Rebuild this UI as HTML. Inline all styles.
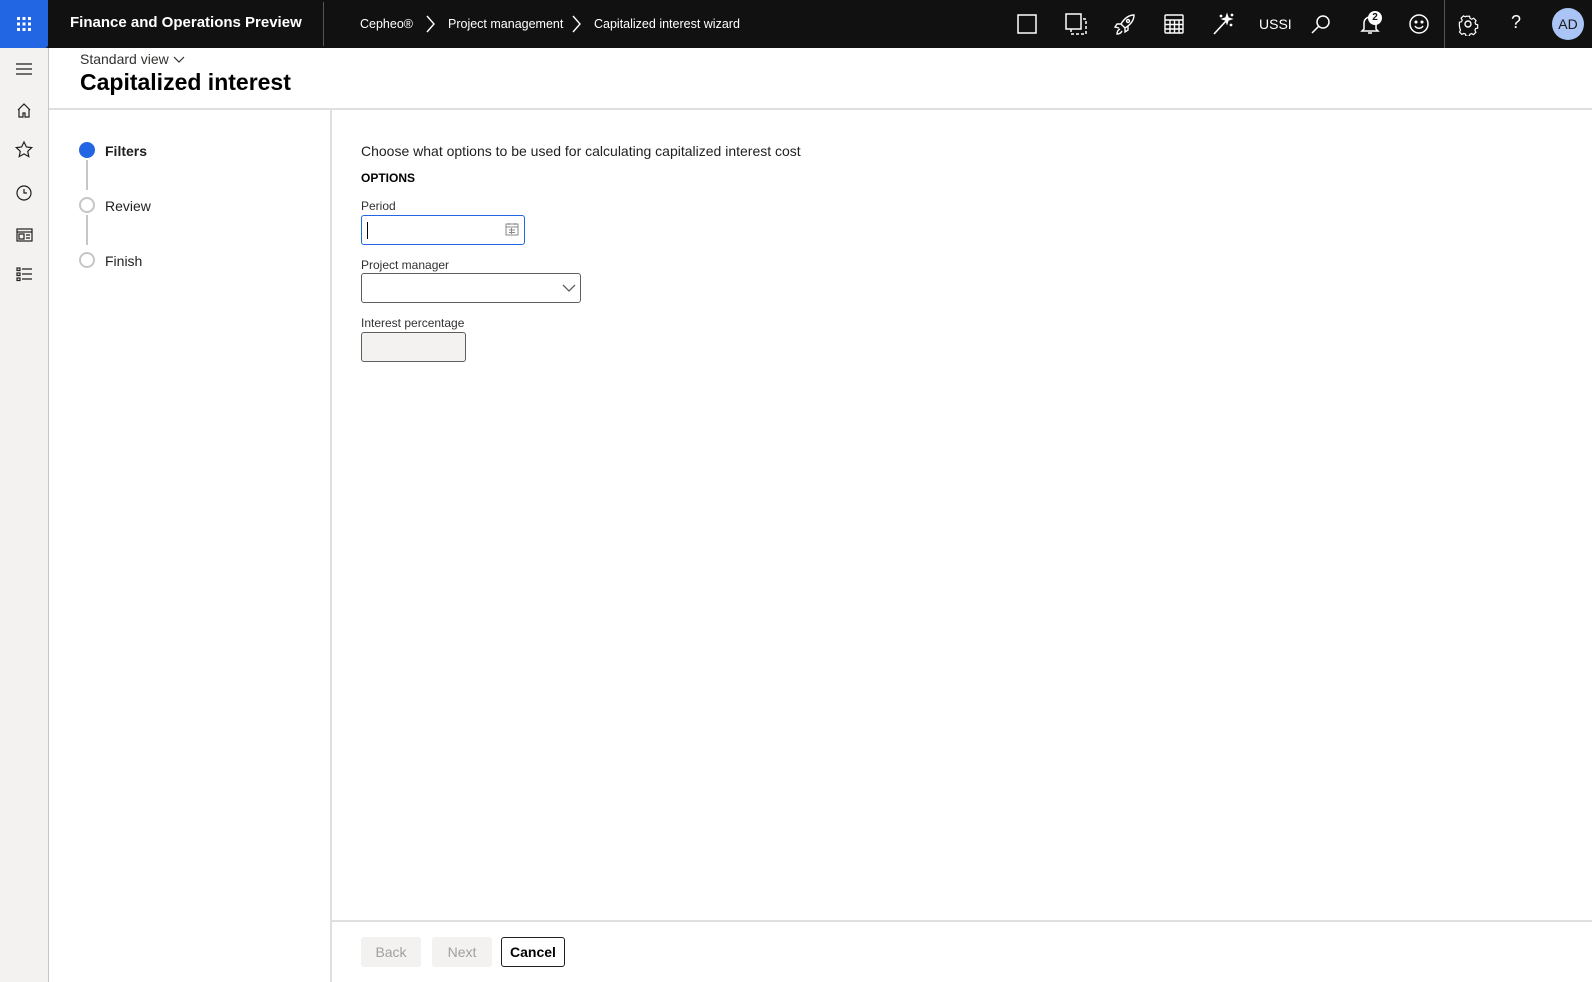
<!DOCTYPE html>
<html><head><meta charset="utf-8"><style>
*{box-sizing:border-box;margin:0;padding:0}
body{width:1592px;height:982px;overflow:hidden;background:#fff;font-family:"Segoe UI","Liberation Sans",sans-serif;color:#201f1e;position:relative}
.abs{position:absolute}
.hdr{left:0;top:0;width:1592px;height:48px;background:#111}
.w{color:#fff}
.ico{position:absolute;top:12px;width:24px;height:24px}
svg{display:block}
.rail{left:0;top:48px;width:49px;height:934px;background:#f3f2f1;border-right:1px solid #c8c6c4}
.lbl{font-size:12px;color:#323130}
</style></head><body>
<div class="abs hdr"></div>
<div class="abs" style="left:0;top:0;width:48px;height:48px;background:#2266e3;border-radius:0 0 3px 0"></div>
<svg class="abs" style="left:16px;top:16px" width="16" height="16" fill="#fff">
<rect x="1" y="1" width="3" height="3"/><rect x="6.5" y="1" width="3" height="3"/><rect x="12" y="1" width="3" height="3"/>
<rect x="1" y="6.5" width="3" height="3"/><rect x="6.5" y="6.5" width="3" height="3"/><rect x="12" y="6.5" width="3" height="3"/>
<rect x="1" y="12" width="3" height="3"/><rect x="6.5" y="12" width="3" height="3"/><rect x="12" y="12" width="3" height="3"/></svg>
<div class="abs w" style="left:70px;top:14px;font-size:15px;font-weight:bold">Finance and Operations Preview</div>
<div class="abs" style="left:323px;top:2px;width:1px;height:44px;background:#555"></div>
<div class="abs w" style="left:360px;top:17px;font-size:12.5px">Cepheo®</div>
<svg class="abs" style="left:424px;top:14px" width="12" height="20"><path d="M3 2l7 8-7 8" stroke="#fff" fill="none" stroke-width="1.4"/></svg>
<div class="abs w" style="left:448px;top:17px;font-size:12.5px">Project management</div>
<svg class="abs" style="left:570px;top:14px" width="12" height="20"><path d="M3 2l7 8-7 8" stroke="#fff" fill="none" stroke-width="1.4"/></svg>
<div class="abs w" style="left:594px;top:17px;font-size:12.5px">Capitalized interest wizard</div>
<svg class="ico" style="left:1015px" viewBox="0 0 24 24" fill="none" stroke="#fff" stroke-width="1.5"><rect x="3" y="3" width="18" height="18"/></svg>
<svg class="ico" style="left:1064px" viewBox="0 0 24 24" fill="none" stroke="#fff" stroke-width="1.5"><rect x="2" y="2" width="15" height="15"/><path d="M7 17v5h15V7h-5" stroke-dasharray="3 2"/></svg>
<svg class="ico" style="left:1113px" viewBox="0 0 24 24" fill="none" stroke="#fff" stroke-width="1.4"><path d="M21 3c-6 0-10 4-13 9l4 4c5-3 9-7 9-13zM8 12l-4 0-2 3 4 1M12 16v4l3-2 0-4M7 17c-2 1-3 3-3 5 2 0 4-1 5-3"/><circle cx="15" cy="9" r="1.5"/></svg>
<svg class="ico" style="left:1162px" viewBox="0 0 24 24" fill="none" stroke="#fff" stroke-width="1.4"><rect x="3" y="3" width="18" height="18" rx="1"/><path d="M3 8h18M3 12.5h18M3 17h18M8 8v13M12.5 8v13M17 8v13"/></svg>
<svg class="ico" style="left:1211px" viewBox="0 0 24 24" fill="none" stroke="#fff" stroke-width="1.6"><path d="M3 22L15 9"/><path d="M16 3l1 3 3 1-3 1-1 3-1-3-3-1 3-1z" fill="#fff"/><circle cx="21" cy="3" r=".6" fill="#fff"/><circle cx="10" cy="4" r=".6" fill="#fff"/><circle cx="20" cy="13" r=".6" fill="#fff"/></svg>
<div class="abs w" style="left:1259px;top:16px;font-size:14px">USSI</div>
<svg class="ico" style="left:1309px" viewBox="0 0 24 24" fill="none" stroke="#fff" stroke-width="1.5"><circle cx="14" cy="10" r="6"/><path d="M10 14l-7 7"/></svg>
<svg class="ico" style="left:1358px" viewBox="0 0 24 24" fill="none" stroke="#fff" stroke-width="1.5"><path d="M6 17V11a6 6 0 0112 0v6l2 2H4zM10 21h4"/></svg>
<div class="abs" style="left:1368px;top:11px;width:14px;height:14px;border-radius:7px;background:#fff;color:#111;font-size:10px;font-weight:bold;text-align:center;line-height:14px">2</div>
<svg class="ico" style="left:1407px" viewBox="0 0 24 24" fill="none" stroke="#fff" stroke-width="1.5"><circle cx="12" cy="12" r="9"/><path d="M8 14c2 3 6 3 8 0"/><circle cx="9" cy="10" r=".8" fill="#fff"/><circle cx="15" cy="10" r=".8" fill="#fff"/></svg>
<div class="abs" style="left:1444px;top:0;width:1px;height:48px;background:#555"></div>
<svg class="ico" style="left:1456px" viewBox="0 0 24 24" fill="none" stroke="#fff" stroke-width="1.4"><circle cx="12" cy="12" r="3"/><path d="M10 3h4l.5 2.5 2 1 2.3-1.2 2.8 2.8-1.2 2.3.8 2 2.3.6v4l-2.5.5-.8 2 1.2 2.3-2.8 2.8-2.3-1.2-2 .8-.6 2.3h-4l-.5-2.5-2-.8-2.3 1.2-2.8-2.8 1.2-2.3-.8-2L2 14v-4l2.5-.5.8-2L4 5.3 6.8 2.5 9 3.7l1-.7z" transform="scale(.85) translate(2 2)"/></svg>
<div class="abs w" style="left:1511px;top:12px;font-size:18px">?</div>
<div class="abs" style="left:1552px;top:8px;width:32px;height:32px;border-radius:16px;background:#a9c4f5;color:#1a1a1a;font-size:14px;text-align:center;line-height:32px">AD</div>
<div class="abs rail"></div>
<svg class="abs" style="left:14px;top:60px" width="20" height="240" fill="none" stroke="#201f1e" stroke-width="1.2">
<path d="M2 4h16M2 9h16M2 14h16"/>
<path d="M4 50l6-6 6 6M5 49v8h4v-4h2v4h4v-8"/>
<path d="M10 82l2.4 5 5.3.6-4 3.7 1.1 5.3-4.8-2.7-4.8 2.7 1.1-5.3-4-3.7 5.3-.6z"/>
<circle cx="10" cy="133" r="7"/><path d="M10 129v4h3"/>
<rect x="3" y="169" width="15" height="12"/><path d="M3 172h15"/><rect x="5" y="174" width="5" height="5"/><path d="M12 175h4M12 178h4"/>
<rect x="3" y="208" width="3" height="2.5"/><rect x="3" y="213" width="3" height="2.5"/><rect x="3" y="218" width="3" height="2.5"/><path d="M8 209h10M8 214h10M8 219h10"/>
</svg>
<div class="abs" style="left:80px;top:51px;font-size:14px;color:#323130">Standard view <svg style="display:inline;vertical-align:middle" width="12" height="12"><path d="M1 3l5 5 5-5" stroke="#323130" fill="none" stroke-width="1.2"/></svg></div>
<div class="abs" style="left:80px;top:69px;font-size:23px;font-weight:600;color:#000">Capitalized interest</div>
<div class="abs" style="left:49px;top:108px;width:1543px;height:2px;background:#e1dfdd"></div>
<div class="abs" style="left:330px;top:110px;width:2px;height:872px;background:#e1dfdd"></div>
<div class="abs" style="left:79px;top:142px;width:16px;height:16px;border-radius:8px;background:#2266e3"></div>
<div class="abs" style="left:86px;top:160px;width:2px;height:30px;background:#c8c6c4"></div>
<div class="abs" style="left:79px;top:197px;width:16px;height:16px;border-radius:8px;border:2px solid #c8c6c4"></div>
<div class="abs" style="left:86px;top:215px;width:2px;height:30px;background:#c8c6c4"></div>
<div class="abs" style="left:79px;top:252px;width:16px;height:16px;border-radius:8px;border:2px solid #c8c6c4"></div>
<div class="abs" style="left:105px;top:143px;font-size:14px;font-weight:600">Filters</div>
<div class="abs" style="left:105px;top:198px;font-size:14px">Review</div>
<div class="abs" style="left:105px;top:253px;font-size:14px">Finish</div>
<div class="abs" style="left:361px;top:143px;font-size:14px;color:#201f1e">Choose what options to be used for calculating capitalized interest cost</div>
<div class="abs" style="left:361px;top:171px;font-size:12px;font-weight:bold;color:#000">OPTIONS</div>
<div class="abs lbl" style="left:361px;top:199px">Period</div>
<div class="abs" style="left:361px;top:215px;width:164px;height:30px;border:1px solid #2266e3;border-radius:3px"></div>
<div class="abs" style="left:367px;top:222px;width:1px;height:17px;background:#000"></div>
<svg class="abs" style="left:505px;top:222px" width="14" height="14" fill="none" stroke="#888" stroke-width="1"><rect x="1" y="2" width="12" height="11"/><path d="M1 5h12M4 1v2M10 1v2M4 8h6M4 10.5h6M6.5 6v6"/></svg>
<div class="abs lbl" style="left:361px;top:258px">Project manager</div>
<div class="abs" style="left:361px;top:273px;width:220px;height:30px;border:1px solid #605e5c;border-radius:3px"></div>
<svg class="abs" style="left:562px;top:283px" width="14" height="10"><path d="M1 2l6 6 6-6" stroke="#605e5c" fill="none" stroke-width="1.3"/></svg>
<div class="abs lbl" style="left:361px;top:316px">Interest percentage</div>
<div class="abs" style="left:361px;top:332px;width:105px;height:30px;border:1px solid #605e5c;border-radius:3px;background:#f3f2f1"></div>
<div class="abs" style="left:330px;top:920px;width:1262px;height:2px;background:#e1dfdd"></div>
<div class="abs" style="left:361px;top:937px;width:60px;height:30px;background:#f3f2f1;border-radius:3px;color:#a19f9d;font-size:14px;text-align:center;line-height:30px">Back</div>
<div class="abs" style="left:432px;top:937px;width:60px;height:30px;background:#f3f2f1;border-radius:3px;color:#a19f9d;font-size:14px;text-align:center;line-height:30px">Next</div>
<div class="abs" style="left:501px;top:937px;width:64px;height:30px;border:1px solid #201f1e;border-radius:3px;color:#000;font-size:14px;font-weight:600;text-align:center;line-height:28px">Cancel</div>
</body></html>
